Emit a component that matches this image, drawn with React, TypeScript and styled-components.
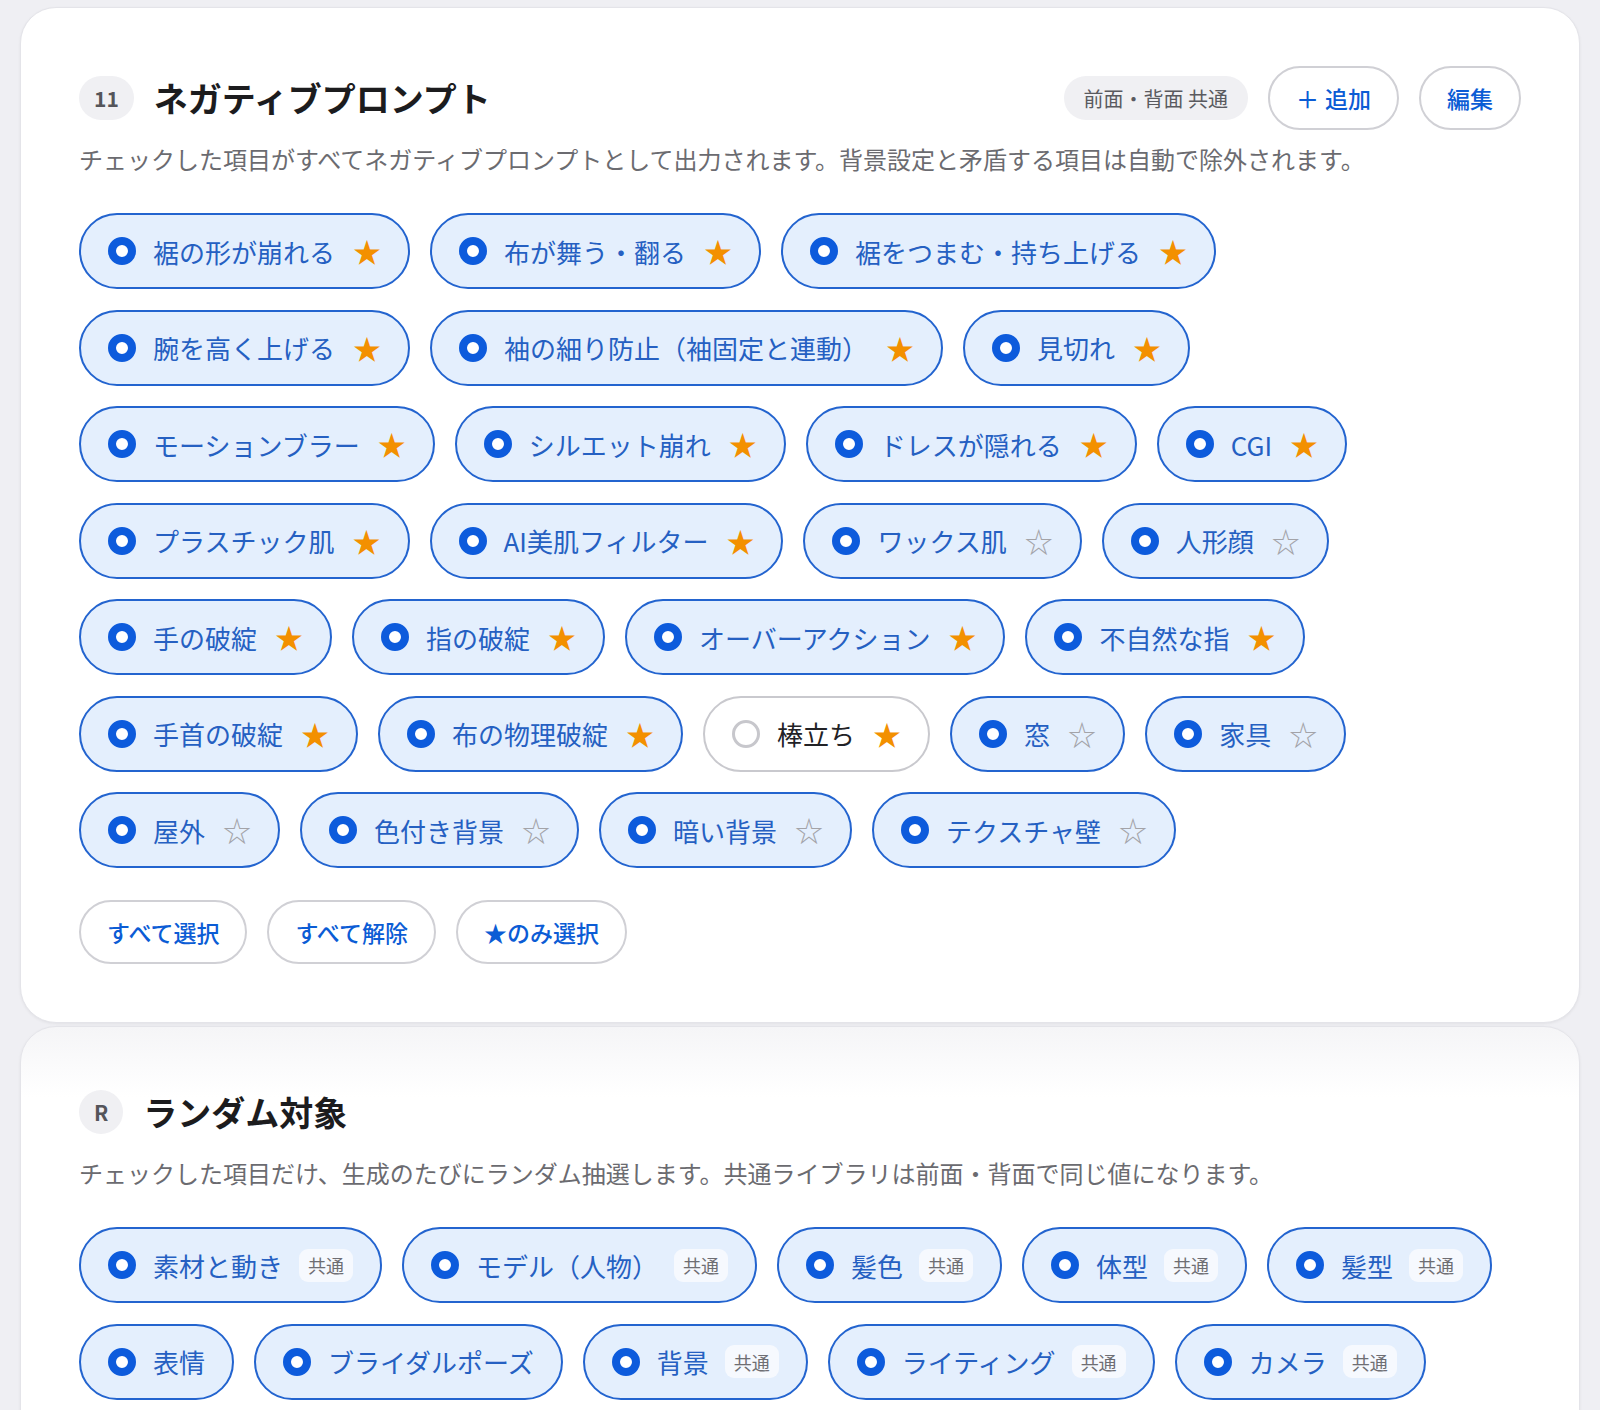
import React from "react";
import { createGlobalStyle, styled } from "styled-components";

type ChipItem = { label: string; on?: boolean; star?: "full" | "empty"; tag?: string };

const negatives: ChipItem[] = [
  { label: "裾の形が崩れる", star: "full" },
  { label: "布が舞う・翻る", star: "full" },
  { label: "裾をつまむ・持ち上げる", star: "full" },
  { label: "腕を高く上げる", star: "full" },
  { label: "袖の細り防止（袖固定と連動）", star: "full" },
  { label: "見切れ", star: "full" },
  { label: "モーションブラー", star: "full" },
  { label: "シルエット崩れ", star: "full" },
  { label: "ドレスが隠れる", star: "full" },
  { label: "CGI", star: "full" },
  { label: "プラスチック肌", star: "full" },
  { label: "AI美肌フィルター", star: "full" },
  { label: "ワックス肌", star: "empty" },
  { label: "人形顔", star: "empty" },
  { label: "手の破綻", star: "full" },
  { label: "指の破綻", star: "full" },
  { label: "オーバーアクション", star: "full" },
  { label: "不自然な指", star: "full" },
  { label: "手首の破綻", star: "full" },
  { label: "布の物理破綻", star: "full" },
  { label: "棒立ち", star: "full", on: false },
  { label: "窓", star: "empty" },
  { label: "家具", star: "empty" },
  { label: "屋外", star: "empty" },
  { label: "色付き背景", star: "empty" },
  { label: "暗い背景", star: "empty" },
  { label: "テクスチャ壁", star: "empty" },
];

const randoms: ChipItem[] = [
  { label: "素材と動き", tag: "共通" },
  { label: "モデル（人物）", tag: "共通" },
  { label: "髪色", tag: "共通" },
  { label: "体型", tag: "共通" },
  { label: "髪型", tag: "共通" },
  { label: "表情" },
  { label: "ブライダルポーズ" },
  { label: "背景", tag: "共通" },
  { label: "ライティング", tag: "共通" },
  { label: "カメラ", tag: "共通" },
];

const GlobalStyle = createGlobalStyle`
  body {
    margin: 0;
    background: #efeff3;
    font-family: "Noto Sans CJK JP", "Noto Sans", sans-serif;
  }
`;

const Page = styled.div`
  display: flex;
  flex-direction: column;
  gap: 3px;
  padding: 7px 20px 0;
`;

const Card = styled.section<{ $top: number; $fade?: boolean }>`
  background: ${(p) => (p.$fade ? "linear-gradient(#f5f5f7, #ffffff 70px)" : "#ffffff")};
  border: 1px solid #e4e4e9;
  border-radius: 36px;
  box-shadow: 0 1px 3px rgba(0, 0, 0, 0.06);
  padding: ${(p) => p.$top}px 58px 58px;
`;

const Header = styled.div`
  display: flex;
  align-items: center;
  min-height: 64px;
`;

const Badge = styled.span`
  display: inline-flex;
  align-items: center;
  justify-content: center;
  height: 44px;
  min-width: 14px;
  padding: 0 15px;
  border-radius: 22px;
  background: #f0f0f3;
  color: #55555a;
  font-size: 21px;
  font-weight: 600;
`;

const Title = styled.h2`
  margin: 0 0 0 20px;
  font-size: 34px;
  font-weight: 700;
  color: #1c1c1e;
  line-height: 1.2;
`;

const Actions = styled.div`
  margin-left: auto;
  display: flex;
  align-items: center;
  gap: 20px;
`;

const Pill = styled.span`
  display: inline-flex;
  align-items: center;
  height: 44px;
  padding: 0 20px;
  border-radius: 22px;
  background: #f0f0f3;
  color: #5a5a5f;
  font-size: 20px;
`;

const Button = styled.button`
  display: inline-flex;
  align-items: center;
  gap: 6px;
  height: 64px;
  padding: 0 26px;
  border: 2px solid #d0d0d5;
  border-radius: 32px;
  background: #ffffff;
  color: #0b5cd5;
  font-family: inherit;
  font-size: 23px;
  font-weight: 500;
`;

const Desc = styled.p`
  margin: 12px 0 0;
  font-size: 24px;
  line-height: 34px;
  color: #6b6b70;
`;

const ChipGrid = styled.div`
  display: flex;
  flex-wrap: wrap;
  gap: 20.5px 20px;
  margin-top: 37px;
`;

const Chip = styled.div<{ $on: boolean }>`
  display: inline-flex;
  align-items: center;
  box-sizing: border-box;
  height: 76px;
  padding: 0 27px 0 27px;
  border: 2px solid ${(p) => (p.$on ? "#2364cf" : "#c9c9ce")};
  border-radius: 38px;
  background: ${(p) => (p.$on ? "#e4effd" : "#ffffff")};
  color: ${(p) => (p.$on ? "#2560c2" : "#222226")};
  font-size: 26px;
`;

const Radio = styled.span<{ $on: boolean }>`
  box-sizing: border-box;
  width: 28px;
  height: 28px;
  margin-right: 17px;
  border-radius: 50%;
  background: #ffffff;
  border: ${(p) => (p.$on ? "8px solid #0d5bdc" : "3px solid #c7c7cc")};
  flex-shrink: 0;
`;

const Star = styled.span<{ $full: boolean }>`
  margin-left: 18px;
  font-size: 28px;
  line-height: 1;
  color: ${(p) => (p.$full ? "#f39000" : "#a3a3a8")};
`;

const Tag = styled.span`
  display: inline-flex;
  align-items: center;
  height: 33px;
  margin-left: 16px;
  padding: 0 9px;
  border-radius: 9px;
  background: #f6f9fe;
  color: #6e6e73;
  font-size: 18px;
`;

const Footer = styled.div`
  display: flex;
  gap: 20px;
  margin-top: 32px;
`;

const ChipView: React.FC<{ item: ChipItem }> = ({ item }) => {
  const on = item.on !== false;
  return (
    <Chip $on={on}>
      <Radio $on={on} />
      <span>{item.label}</span>
      {item.star && <Star $full={item.star === "full"}>{item.star === "full" ? "★" : "☆"}</Star>}
      {item.tag && <Tag>{item.tag}</Tag>}
    </Chip>
  );
};

const App: React.FC = () => {
  return (
    <>
      <GlobalStyle />
      <Page>
        <Card $top={58}>
          <Header>
            <Badge>11</Badge>
            <Title>ネガティブプロンプト</Title>
            <Actions>
              <Pill>前面・背面 共通</Pill>
              <Button>
                <span>＋</span>追加
              </Button>
              <Button>編集</Button>
            </Actions>
          </Header>
          <Desc>
            チェックした項目がすべてネガティブプロンプトとして出力されます。背景設定と矛盾する項目は自動で除外されます。
          </Desc>
          <ChipGrid>
            {negatives.map((item, index) => (
              <ChipView key={index} item={item} />
            ))}
          </ChipGrid>
          <Footer>
            <Button>すべて選択</Button>
            <Button>すべて解除</Button>
            <Button>★のみ選択</Button>
          </Footer>
        </Card>
        <Card $top={53} $fade>
          <Header>
            <Badge>R</Badge>
            <Title>ランダム対象</Title>
          </Header>
          <Desc>
            チェックした項目だけ、生成のたびにランダム抽選します。共通ライブラリは前面・背面で同じ値になります。
          </Desc>
          <ChipGrid>
            {randoms.map((item, index) => (
              <ChipView key={index} item={item} />
            ))}
          </ChipGrid>
        </Card>
      </Page>
    </>
  );
};

export default App;
